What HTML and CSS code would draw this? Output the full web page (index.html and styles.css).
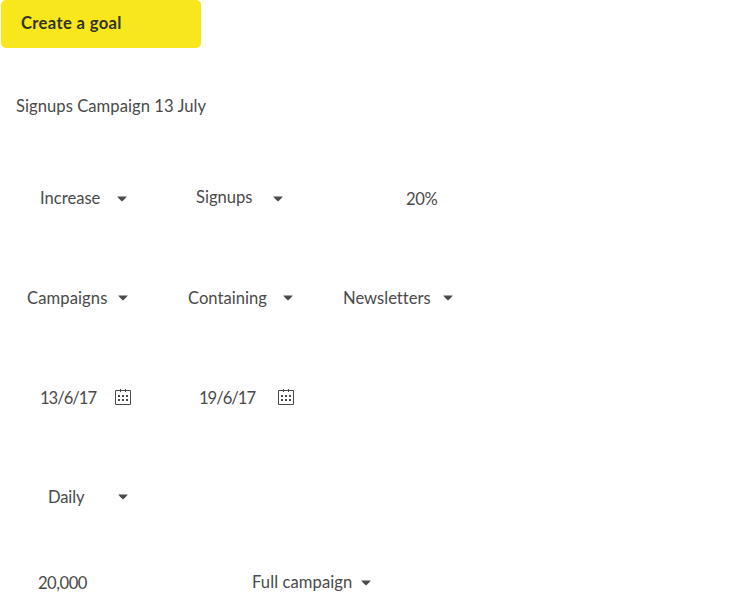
FILE: index.html
```html
<!DOCTYPE html>
<html lang="en">
<head>
<meta charset="utf-8">
<title>Create a goal</title>
<link rel="stylesheet" href="styles.css">
</head>
<body>
<svg class="symbols" aria-hidden="true">
  <symbol id="caret" viewBox="0 0 10 6"><path d="M.2.4h9.6Q7.6 3.4 5 5.4 2.4 3.4.2.4z" fill="#4a4a4a"/></symbol>
  <symbol id="calendar" viewBox="0 0 16 16">
    <path d="M.5 1.5h15v14H.5zM5.5 0v3M10.5 0v3" fill="none" stroke="#4a4a4a"/>
    <path d="M3 6h2v2H3zM7 6h2v2H7zM11 6h2v2h-2zM3 10h2v2H3zM7 10h2v2H7zM11 10h2v2h-2z" fill="#4a4a4a"/>
  </symbol>
</svg>
<main class="form">
  <button class="create">Create a goal</button>
  <div class="row name"><span class="text title">Signups Campaign 13 July</span></div>
  <div class="row metric">
    <span class="text increase">Increase</span><svg class="caret"><use href="#caret"/></svg>
    <span class="text signups">Signups</span><svg class="caret"><use href="#caret"/></svg>
    <span class="text percent">20%</span>
  </div>
  <div class="row filter">
    <span class="text campaigns">Campaigns</span><svg class="caret"><use href="#caret"/></svg>
    <span class="text containing">Containing</span><svg class="caret"><use href="#caret"/></svg>
    <span class="text newsletters">Newsletters</span><svg class="caret"><use href="#caret"/></svg>
  </div>
  <div class="row dates">
    <span class="text date">13/6/17</span><svg class="calendar"><use href="#calendar"/></svg>
    <span class="text date">19/6/17</span><svg class="calendar"><use href="#calendar"/></svg>
  </div>
  <div class="row period"><span class="text daily">Daily</span><svg class="caret"><use href="#caret"/></svg></div>
  <div class="row total">
    <span class="text amount">20,000</span>
    <span class="text full">Full campaign</span><svg class="caret"><use href="#caret"/></svg>
  </div>
</main>
</body>
</html>
```
FILE: styles.css
```css
* { box-sizing: border-box; }
body { margin: 0; background: #fff; color: #4a4a4a; font: 16.6px/20px Lato, "Liberation Sans", sans-serif; font-variant-ligatures: none; overflow: hidden; }
.symbols { display: none; }
.form { display: flex; flex-direction: column; height: 600px; }
.create { width: 200px; height: 48px; margin: 0 0 0 1px; padding: 0 20px 2px; border: 0; border-radius: 5px; background: #f8e71c; color: #333328; font: bold 16.6px/20px Lato, sans-serif; letter-spacing: .35px; text-align: left; }
.row { display: grid; height: 20px; grid-template-rows: 20px; align-items: center; }
.text { padding-top: 2px; white-space: nowrap; }
.caret { display: block; width: 10px; height: 6px; margin-top: 2px; }
.calendar { display: block; width: 16px; height: 16px; }
.name { margin: 47px 0 0 16px; }
.title { letter-spacing: .05px; }
.metric { margin: 73px 0 0 40px; grid-template-columns: 77px 79px 77px 133px auto; }
.filter { margin: 79px 0 0 27px; grid-template-columns: 91px 70px 95px 60px 100px auto; }
.campaigns { letter-spacing: .1px; }
.dates { margin: 80px 0 0 40px; grid-template-columns: 75px 84px 79px auto; }
.period { margin: 79px 0 0 48px; grid-template-columns: 70px auto; }
.total { margin: 66px 0 0 38px; grid-template-columns: 214px 109px auto; }
.increase { padding-top: 0; }
.signups { padding-top: 0; margin-top: -2px; }
.percent { padding-top: 0; margin-top: 2px; letter-spacing: -.4px; }
.date { letter-spacing: -1px; }
.daily { letter-spacing: -.15px; }
.amount { letter-spacing: -.5px; }
.full { padding-top: 0; letter-spacing: .08px; }
```
